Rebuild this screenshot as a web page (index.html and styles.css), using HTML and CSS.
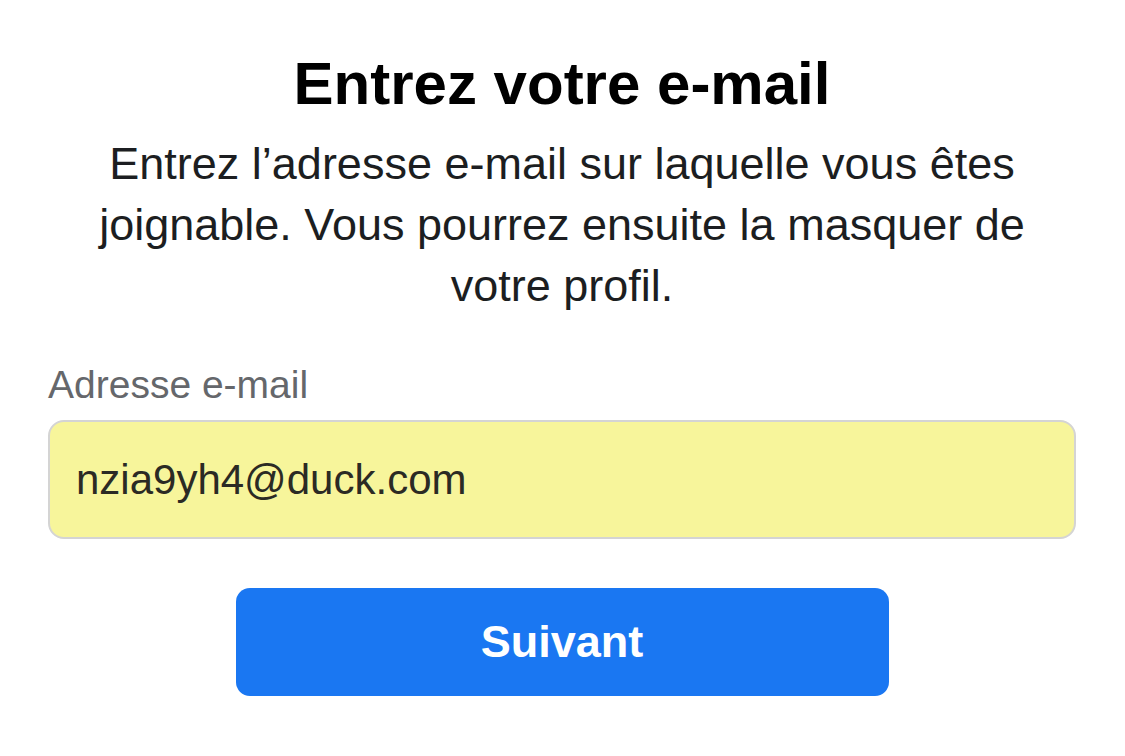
FILE: index.html
```html
<!DOCTYPE html>
<html lang="fr">
<head>
<meta charset="utf-8">
<title>Entrez votre e-mail</title>
<link rel="stylesheet" href="styles.css">
</head>
<body>
<main class="page">
  <h1 class="title">Entrez votre e-mail</h1>
  <p class="intro">Entrez l’adresse e-mail sur laquelle vous êtes joignable. Vous pourrez ensuite la masquer de votre profil.</p>
  <label class="label" for="email">Adresse e-mail</label>
  <div class="field">
    <input class="input" id="email" type="text" value="nzia9yh4@duck.com">
  </div>
  <div class="actions">
    <button class="btn" type="button">Suivant</button>
  </div>
</main>
</body>
</html>
```

FILE: styles.css
```css
html, body {
  margin: 0;
  padding: 0;
  background: #ffffff;
}

body {
  font-family: "Liberation Sans", Arial, Helvetica, sans-serif;
}

.page {
  display: flex;
  flex-direction: column;
  padding: 48px 49px 0 48px;
}

.title {
  margin: 0;
  font-size: 60px;
  line-height: 72px;
  font-weight: 700;
  color: #000000;
  text-align: center;
}

.intro {
  margin: 13px 0 0 0;
  font-size: 45px;
  line-height: 61px;
  color: #1c1e21;
  text-align: center;
}

.label {
  margin-top: 46px;
  font-size: 39px;
  line-height: 46px;
  color: #65676b;
}

.field {
  margin-top: 12px;
  display: flex;
}

.input {
  flex: 1;
  box-sizing: border-box;
  height: 119px;
  margin: 0;
  padding: 0 26px;
  border: 2px solid #d4d4d4;
  border-radius: 16px;
  background: #f7f59b;
  font-family: "Liberation Sans", Arial, Helvetica, sans-serif;
  font-size: 42px;
  color: #2b2a24;
  outline: none;
}

.actions {
  display: flex;
  justify-content: center;
  margin-top: 49px;
}

.btn {
  width: 653px;
  height: 108px;
  border: 0;
  border-radius: 14px;
  background: #1a77f2;
  color: #ffffff;
  font-family: "Liberation Sans", Arial, Helvetica, sans-serif;
  font-size: 45px;
  font-weight: 700;
  cursor: pointer;
}
```
